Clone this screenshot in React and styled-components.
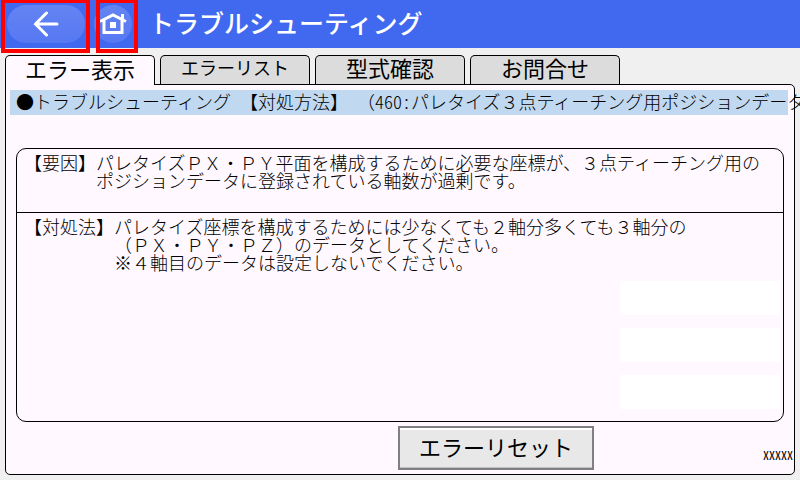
import { useState } from "react";
import styled, { createGlobalStyle } from "styled-components";

const abas = [
    { id: "erro", nome: "エラー表示" },
    { id: "lista", nome: "エラーリスト", pequeno: true },
    { id: "modelo", nome: "型式確認" },
    { id: "contato", nome: "お問合せ" },
];

const secoes = [
    {
        rotulo: "【要因】",
        linhas: [
            "パレタイズＰＸ・ＰＹ平面を構成するために必要な座標が、３点ティーチング用の",
            "ポジションデータに登録されている軸数が過剰です。",
        ],
    },
    {
        rotulo: "【対処法】",
        linhas: [
            "パレタイズ座標を構成するためには少なくても２軸分多くても３軸分の",
            "（ＰＸ・ＰＹ・ＰＺ）のデータとしてください。",
            "※４軸目のデータは設定しないでください。",
        ],
    },
];

export default function App(){
    const [aba, setAba] = useState("erro");

    return(
        <>
            <Global />
            <Tela>
                <Topo>
                    <Destaque>
                        <Voltar type="button" aria-label="戻る">
                            <svg width="26" height="26" viewBox="0 0 26 26" fill="none" stroke="#fff" strokeWidth="3">
                                <path d="M13.5 2 L2.5 13 L13.5 24 M2.5 13 H24" strokeLinecap="round" />
                            </svg>
                        </Voltar>
                    </Destaque>
                    <Destaque estreito>
                        <Inicio type="button" aria-label="ホーム">
                            <svg width="28" height="24" viewBox="0 0 28 24" fill="none" stroke="#fff" strokeWidth="3">
                                <path d="M1 9.5 L14 3 L27 9.5 M5 8 V20.5 H23 V8 M23.5 2 V8" />
                                <rect x="11" y="10" width="6" height="6" fill="#fff" stroke="none" />
                            </svg>
                        </Inicio>
                    </Destaque>
                    <Titulo>トラブルシューティング</Titulo>
                </Topo>

                <Abas role="tablist">
                    {abas.map(({ id, nome, pequeno }) => (
                        <Aba
                            key={id}
                            type="button"
                            role="tab"
                            aria-selected={aba === id}
                            $ativa={aba === id}
                            $pequeno={pequeno}
                            onClick={() => setAba(id)}
                        >
                            {nome}
                        </Aba>
                    ))}
                </Abas>

                <Painel>
                    <Faixa>
                        <span>●トラブルシューティング</span>
                        <span>【対処方法】</span>
                        <span>（<Meia>460:</Meia>パレタイズ３点ティーチング用ポジションデータ</span>
                    </Faixa>
                    <Quadro>
                        {secoes.map(({ rotulo, linhas }) => (
                            <Secao key={rotulo}>
                                <Rotulo>{rotulo}</Rotulo>
                                <div>
                                    {linhas.map(linha => <Linha key={linha}>{linha}</Linha>)}
                                </div>
                            </Secao>
                        ))}
                        <Campos>
                            <Campo />
                            <Campo />
                            <Campo />
                        </Campos>
                    </Quadro>
                    <Rodape>
                        <Resetar type="button">エラーリセット</Resetar>
                        <Codigo>XXXXX</Codigo>
                    </Rodape>
                </Painel>
            </Tela>
        </>
    );
}

function Destaque({ estreito, children }) {
    return (
        <Grupo $estreito={estreito}>
            {children}
            <Moldura $estreito={estreito} />
        </Grupo>
    );
}

const Global = createGlobalStyle`
    * {
        box-sizing: border-box;
    }
    body {
        margin: 0;
        background: #f0f0f0;
        color: #000;
        font-family: "Noto Sans CJK JP", sans-serif;
    }
    h1, h2, p {
        margin: 0;
        font-weight: 400;
    }
    button {
        padding: 0;
        font-family: inherit;
        color: inherit;
        cursor: pointer;
    }
`;

const Tela = styled.div`
    min-height: 100vh;
    display: flex;
    flex-direction: column;
    overflow: hidden;
`;

const Topo = styled.header`
    height: 48px;
    padding-left: 7px;
    display: flex;
    align-items: center;
    background: #4169f0;
`;

const Grupo = styled.div`
    position: relative;
    margin-right: ${({ $estreito }) => ($estreito ? 17 : 9)}px;
`;

/* moldura vermelha por cima dos botões */
const Moldura = styled.span`
    position: absolute;
    top: -5px;
    left: ${({ $estreito }) => ($estreito ? 2 : -6)}px;
    width: ${({ $estreito }) => ($estreito ? 42 : 89)}px;
    height: 53px;
    border: 4px solid #ff0000;
    border-top-width: 3px;
    pointer-events: none;
`;

const Voltar = styled.button`
    width: 78px;
    height: 38px;
    display: flex;
    justify-content: center;
    align-items: center;
    background: linear-gradient(#6484f3, #5678f2);
    border: none;
    border-radius: 19px;
`;

const Inicio = styled(Voltar)`
    width: 38px;
`;

const Titulo = styled.h1`
    padding-bottom: 4px;
    font-size: 25px;
    font-weight: 500;
    line-height: 44px;
    color: #fff;
    white-space: nowrap;
`;

const Abas = styled.div`
    margin: 7px 5px 0;
    display: flex;
    gap: 5px;
`;

const Aba = styled.button`
    position: relative;
    width: 150px;
    height: ${({ $ativa }) => ($ativa ? 30 : 29)}px;
    margin-bottom: ${({ $ativa }) => ($ativa ? -1 : 0)}px;
    padding-bottom: 6px;
    background: ${({ $ativa }) => ($ativa ? "#fff8ff" : "#dcdcdc")};
    border: 1px solid #000;
    border-bottom: none;
    border-radius: 5px 5px 0 0;
    font-size: ${({ $pequeno }) => ($pequeno ? 18 : 22)}px;
    font-weight: 400;
    line-height: 22px;
`;

const Painel = styled.main`
    flex: 1;
    margin: 0 5px 5px;
    padding: 5px 6px 4px 4px;
    display: flex;
    flex-direction: column;
    background: #fff8ff;
    border: 1px solid #000;
    border-radius: 0 5px 5px 5px;
`;

const Faixa = styled.h2`
    height: 25px;
    padding-left: 6px;
    display: flex;
    gap: 9px;
    background: #c0d8f0;
    font-size: 18px;
    font-weight: 300;
    line-height: 22px;
    white-space: nowrap;
`;

const Meia = styled.span`
    font-feature-settings: "hwid";
`;

const Quadro = styled.section`
    flex: 1;
    margin: 33px 4px 0 6px;
    display: flex;
    flex-direction: column;
    border: 1px solid #000;
    border-radius: 10px;
`;

const Secao = styled.div`
    min-height: 63px;
    padding: 4px 7px;
    display: flex;
    font-size: 18px;
    font-weight: 300;
    line-height: 18px;
    white-space: nowrap;

    & + & {
        border-top: 1px solid #000;
    }
`;

const Rotulo = styled.h2`
    font-size: 18px;
    font-weight: 300;
`;

const Linha = styled.p`
    font-weight: 300;
`;

const Campos = styled.div`
    margin-top: auto;
    padding: 0 3px 12px;
    display: flex;
    flex-direction: column;
    align-items: flex-end;
    gap: 13px;
`;

const Campo = styled.div`
    width: 160px;
    height: 34px;
    background: #fff;
`;

const Rodape = styled.footer`
    margin-top: 4px;
    display: grid;
    grid-template-columns: 2fr auto 1fr;
    align-items: center;
`;

const Resetar = styled.button`
    grid-column: 2;
    width: 196px;
    height: 44px;
    padding-bottom: 4px;
    background: #e8e8e8;
    border: 2px solid #808080;
    box-shadow: inset 0 2px #fff, inset 0 -1px #c0c0c0;
    font-size: 22px;
    font-weight: 400;
`;

const Codigo = styled.span`
    justify-self: end;
    margin: 12px -5px 0 0;
    font-size: 12px;
    font-feature-settings: "hwid";
`;
